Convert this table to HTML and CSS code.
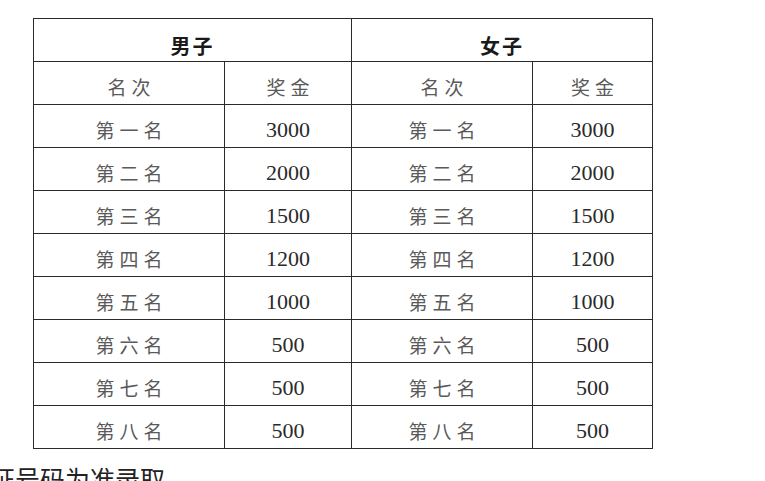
FILE: index.html
```html
<!DOCTYPE html>
<html lang="zh">
<head>
<meta charset="utf-8">
<link rel="stylesheet" href="styles.css">
</head>
<body>
<table class="prize">
  <colgroup>
    <col class="c1"><col class="c2"><col class="c3"><col class="c4">
  </colgroup>
  <tr class="head"><th colspan="2">男子</th><th colspan="2">女子</th></tr>
  <tr class="sub"><td class="cjk">名次</td><td class="cjk">奖金</td><td class="cjk">名次</td><td class="cjk">奖金</td></tr>
  <tr><td class="cjk">第一名</td><td class="num">3000</td><td class="cjk">第一名</td><td class="num">3000</td></tr>
  <tr><td class="cjk">第二名</td><td class="num">2000</td><td class="cjk">第二名</td><td class="num">2000</td></tr>
  <tr><td class="cjk">第三名</td><td class="num">1500</td><td class="cjk">第三名</td><td class="num">1500</td></tr>
  <tr><td class="cjk">第四名</td><td class="num">1200</td><td class="cjk">第四名</td><td class="num">1200</td></tr>
  <tr><td class="cjk">第五名</td><td class="num">1000</td><td class="cjk">第五名</td><td class="num">1000</td></tr>
  <tr><td class="cjk">第六名</td><td class="num">500</td><td class="cjk">第六名</td><td class="num">500</td></tr>
  <tr><td class="cjk">第七名</td><td class="num">500</td><td class="cjk">第七名</td><td class="num">500</td></tr>
  <tr><td class="cjk">第八名</td><td class="num">500</td><td class="cjk">第八名</td><td class="num">500</td></tr>
</table>
<p class="note">证号码为准录取</p>
</body>
</html>
```

FILE: styles.css
```css
html, body {
  margin: 0;
  padding: 0;
  background: #ffffff;
  overflow: hidden;
}
body {
  width: 765px;
  height: 481px;
  font-family: "Liberation Serif", "Noto Sans CJK SC", serif;
}
.prize {
  border-collapse: collapse;
  margin: 18px 0 0 33px;
  width: 619px;
  table-layout: fixed;
}
.c1 { width: 191px; }
.c2 { width: 127px; }
.c3 { width: 181px; }
.c4 { width: 120px; }
.prize th,
.prize td {
  border: 1px solid #2a2a2a;
  height: 43px;
  padding: 8px 0 0 0;
  box-sizing: border-box;
  text-align: center;
  vertical-align: middle;
  line-height: 24px;
}
.prize th {
  font-family: "Noto Sans CJK SC", sans-serif;
  font-weight: 700;
  font-size: 20px;
  letter-spacing: 2px;
  padding-top: 12px;
  color: #1a1a1a;
}
.cjk {
  font-family: "Noto Sans CJK SC", sans-serif;
  font-weight: 400;
  font-size: 19px;
  letter-spacing: 5px;
  text-indent: 5px;
  color: #5a5a5a;
}
.num {
  font-family: "Liberation Serif", serif;
  font-size: 22px;
  color: #2a2a2a;
}
.note {
  margin: 14px 0 0 -10px;
  font-family: "Noto Sans CJK SC", sans-serif;
  font-size: 25px;
  line-height: 30px;
  color: #222;
  white-space: nowrap;
}
```
